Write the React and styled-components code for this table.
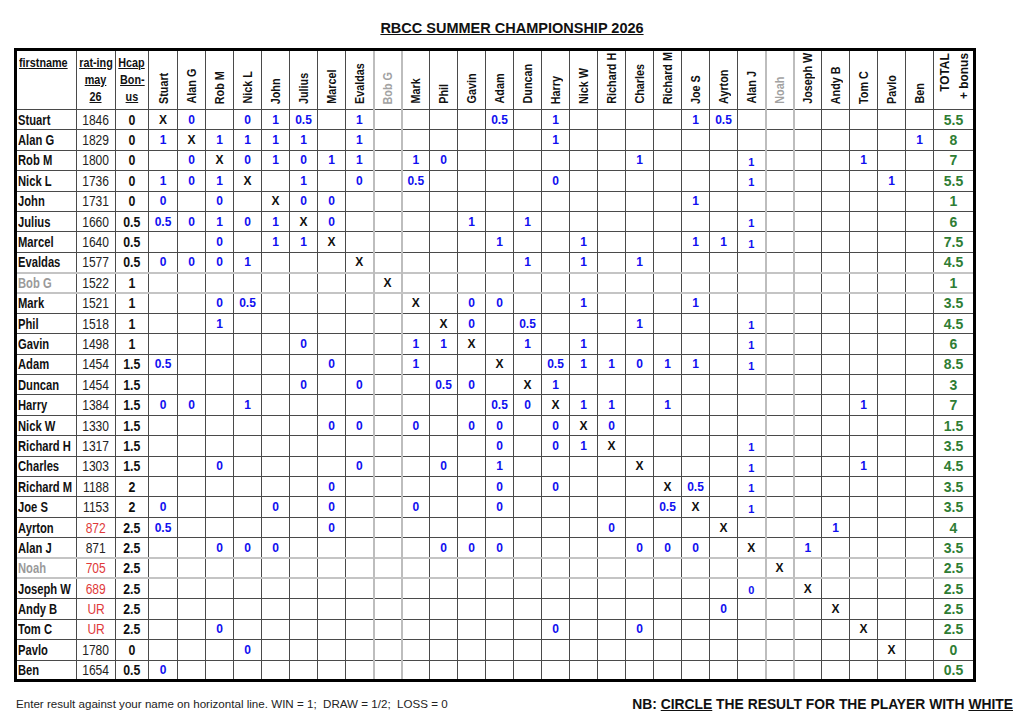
import React from 'react';
import styled, { createGlobalStyle } from 'styled-components';

const GlobalStyle = createGlobalStyle`
  html, body { margin: 0; padding: 0; background: #fff; }
  body { font-family: "Liberation Sans", Arial, sans-serif; color: #111; }
`;

const SANS = `"Liberation Sans", Arial, sans-serif`;

const Page = styled.div`
  width: 1024px;
  height: 721px;
  box-sizing: border-box;
  padding: 18px 0 0 14px;
  display: flex;
  flex-direction: column;
`;

const Title = styled.h1`
  margin: 0 0 10px -14px;
  width: 1024px;
  text-align: center;
  font-family: ${SANS};
  font-size: 14.5px;
  line-height: 20px;
  font-weight: 700;
  text-decoration: underline;
  color: #111;
`;

/* condensed look: the narrow face is not installed, so glyphs are squeezed */
const Squeeze = styled.span`
  display: inline-block;
  white-space: nowrap;
  text-decoration: ${(p) => (p.$u ? 'underline' : 'none')};
  transform: scaleX(${(p) => p.$k || 0.8});
  transform-origin: ${(p) => (p.$center ? 'center' : 'left')};
  margin: ${(p) => (p.$center ? '0 -20px' : '0')};
`;

const Grid = styled.table`
  width: 959px;
  table-layout: fixed;
  border-collapse: collapse;
  border: 3px solid #000;
`;

const HeadRow = styled.tr`
  height: 60px;
`;

const BodyRow = styled.tr`
  height: 20.4px;
`;

const cellBorder = (p) =>
  `border-left: ${p.$mutedCol ? '2px solid #bdbdbd' : '1px solid #4a4a4a'};
   border-right: ${p.$mutedCol ? '2px solid #bdbdbd' : '1px solid #4a4a4a'};
   border-top: ${p.$mutedRow ? '2px solid #c4c4c4' : '1px solid #4a4a4a'};
   border-bottom: ${p.$mutedRow ? '2px solid #c4c4c4' : '1px solid #4a4a4a'};`;

const HeadCell = styled.th`
  ${cellBorder}
  padding: ${(p) => (p.$top ? '2px 0 0 0' : '0 0 2px 0')};
  vertical-align: ${(p) => (p.$top ? 'top' : 'bottom')};
  text-align: center;
  font-family: ${SANS};
  font-weight: 700;
  font-size: 13.5px;
  overflow: hidden;
  color: ${(p) => (p.$muted ? '#a2a2a2' : '#111')};
`;

const CornerLabel = styled.div`
  text-align: ${(p) => (p.$left ? 'left' : 'center')};
  padding: 1px 0 0 ${(p) => (p.$left ? '2px' : '0')};
  font-family: ${SANS};
  font-weight: 700;
  font-size: 13.5px;
  line-height: 17px;
  color: #111;
`;

const Rotated = styled.div`
  display: inline-block;
  writing-mode: vertical-rl;
  transform: rotate(180deg);
  white-space: ${(p) => (p.$wrap ? 'pre-line' : 'nowrap')};
  text-align: ${(p) => (p.$end ? 'end' : 'start')};
  line-height: ${(p) => (p.$wrap ? '19px' : '15px')};
`;

const RotText = styled.span`
  display: inline-block;
  white-space: inherit;
  transform: scaleY(${(p) => p.$k || 0.8});
  transform-origin: ${(p) => (p.$end ? 'bottom' : 'top')};
  margin-bottom: ${(p) => (p.$end ? '0' : '-14px')};
  margin-top: ${(p) => (p.$end ? '-6px' : '0')};
`;

const NameCell = styled.td`
  ${cellBorder}
  padding: 0 0 0 1px;
  white-space: nowrap;
  overflow: hidden;
  font-family: ${SANS};
  font-weight: 700;
  font-size: 14px;
  color: ${(p) => (p.$muted ? '#9a9a9a' : '#111')};
`;

const RatingCell = styled.td`
  ${cellBorder}
  padding: 0;
  text-align: center;
  font-family: ${SANS};
  font-size: 14px;
  color: ${(p) => (p.$red ? '#e03a3a' : '#222')};
`;

const HcapCell = styled.td`
  ${cellBorder}
  padding: 0;
  text-align: center;
  font-family: ${SANS};
  font-weight: 700;
  font-size: 14px;
  color: #111;
`;

const ResultCell = styled.td`
  ${cellBorder}
  padding: ${(p) => (p.$small ? '3px 0 0 0' : '0')};
  text-align: center;
  font-family: ${SANS};
  font-weight: 700;
  font-size: ${(p) => (p.$small ? '11px' : '12px')};
  color: ${(p) => (p.$cross ? '#111' : '#1010f0')};
`;

const TotalCell = styled.td`
  ${cellBorder}
  padding: 0;
  text-align: center;
  font-family: ${SANS};
  font-weight: 700;
  font-size: 14px;
  color: #2f7d34;
`;

const Footer = styled.div`
  margin-top: 14px;
  width: 999px;
  display: flex;
  justify-content: space-between;
  align-items: center;
  padding-left: 2px;
  box-sizing: border-box;
`;

const Note = styled.div`
  font-family: ${SANS};
  font-size: 11.6px;
  white-space: pre;
  color: #222;
`;

const Warning = styled.div`
  font-family: ${SANS};
  font-weight: 700;
  font-size: 13.85px;
  color: #111;
  white-space: pre;
`;

const Under = styled.span`
  text-decoration: underline;
`;

const players = [
  'Stuart', 'Alan G', 'Rob M', 'Nick L', 'John', 'Julius', 'Marcel', 'Evaldas',
  'Bob G', 'Mark', 'Phil', 'Gavin', 'Adam', 'Duncan', 'Harry', 'Nick W',
  'Richard H', 'Charles', 'Richard M', 'Joe S', 'Ayrton', 'Alan J', 'Noah',
  'Joseph W', 'Andy B', 'Tom C', 'Pavlo', 'Ben',
];
const mutedIdx = new Set([8, 22]);
const smallCol = 21;

const rows = [
  ['Stuart', '1846', false, '0', { 0: 'X', 1: '0', 3: '0', 4: '1', 5: '0.5', 7: '1', 12: '0.5', 14: '1', 19: '1', 20: '0.5' }, '5.5'],
  ['Alan G', '1829', false, '0', { 0: '1', 1: 'X', 2: '1', 3: '1', 4: '1', 5: '1', 7: '1', 14: '1', 27: '1' }, '8'],
  ['Rob M', '1800', false, '0', { 1: '0', 2: 'X', 3: '0', 4: '1', 5: '0', 6: '1', 7: '1', 9: '1', 10: '0', 17: '1', 21: '1', 25: '1' }, '7'],
  ['Nick L', '1736', false, '0', { 0: '1', 1: '0', 2: '1', 3: 'X', 5: '1', 7: '0', 9: '0.5', 14: '0', 21: '1', 26: '1' }, '5.5'],
  ['John', '1731', false, '0', { 0: '0', 2: '0', 4: 'X', 5: '0', 6: '0', 19: '1' }, '1'],
  ['Julius', '1660', false, '0.5', { 0: '0.5', 1: '0', 2: '1', 3: '0', 4: '1', 5: 'X', 6: '0', 11: '1', 13: '1', 21: '1' }, '6'],
  ['Marcel', '1640', false, '0.5', { 2: '0', 4: '1', 5: '1', 6: 'X', 12: '1', 15: '1', 19: '1', 20: '1', 21: '1' }, '7.5'],
  ['Evaldas', '1577', false, '0.5', { 0: '0', 1: '0', 2: '0', 3: '1', 7: 'X', 13: '1', 15: '1', 17: '1' }, '4.5'],
  ['Bob G', '1522', false, '1', { 8: 'X' }, '1'],
  ['Mark', '1521', false, '1', { 2: '0', 3: '0.5', 9: 'X', 11: '0', 12: '0', 15: '1', 19: '1' }, '3.5'],
  ['Phil', '1518', false, '1', { 2: '1', 10: 'X', 11: '0', 13: '0.5', 17: '1', 21: '1' }, '4.5'],
  ['Gavin', '1498', false, '1', { 5: '0', 9: '1', 10: '1', 11: 'X', 13: '1', 15: '1', 21: '1' }, '6'],
  ['Adam', '1454', false, '1.5', { 0: '0.5', 6: '0', 9: '1', 12: 'X', 14: '0.5', 15: '1', 16: '1', 17: '0', 18: '1', 19: '1', 21: '1' }, '8.5'],
  ['Duncan', '1454', false, '1.5', { 5: '0', 7: '0', 10: '0.5', 11: '0', 13: 'X', 14: '1' }, '3'],
  ['Harry', '1384', false, '1.5', { 0: '0', 1: '0', 3: '1', 12: '0.5', 13: '0', 14: 'X', 15: '1', 16: '1', 18: '1', 25: '1' }, '7'],
  ['Nick W', '1330', false, '1.5', { 6: '0', 7: '0', 9: '0', 11: '0', 12: '0', 14: '0', 15: 'X', 16: '0' }, '1.5'],
  ['Richard H', '1317', false, '1.5', { 12: '0', 14: '0', 15: '1', 16: 'X', 21: '1' }, '3.5'],
  ['Charles', '1303', false, '1.5', { 2: '0', 7: '0', 10: '0', 12: '1', 17: 'X', 21: '1', 25: '1' }, '4.5'],
  ['Richard M', '1188', false, '2', { 6: '0', 12: '0', 14: '0', 18: 'X', 19: '0.5', 21: '1' }, '3.5'],
  ['Joe S', '1153', false, '2', { 0: '0', 4: '0', 6: '0', 9: '0', 12: '0', 18: '0.5', 19: 'X', 21: '1' }, '3.5'],
  ['Ayrton', '872', true, '2.5', { 0: '0.5', 6: '0', 16: '0', 20: 'X', 24: '1' }, '4'],
  ['Alan J', '871', false, '2.5', { 2: '0', 3: '0', 4: '0', 10: '0', 11: '0', 12: '0', 17: '0', 18: '0', 19: '0', 21: 'X', 23: '1' }, '3.5'],
  ['Noah', '705', true, '2.5', { 22: 'X' }, '2.5'],
  ['Joseph W', '689', true, '2.5', { 21: '0', 23: 'X' }, '2.5'],
  ['Andy B', 'UR', true, '2.5', { 20: '0', 24: 'X' }, '2.5'],
  ['Tom C', 'UR', true, '2.5', { 2: '0', 14: '0', 17: '0', 25: 'X' }, '2.5'],
  ['Pavlo', '1780', false, '0', { 3: '0', 26: 'X' }, '0'],
  ['Ben', '1654', false, '0.5', { 0: '0' }, '0.5'],
];

const colWidths = [61, 39, 33, 29, ...Array(27).fill(28), 41];

export default function App() {
  return (
    <>
      <GlobalStyle />
      <Page>
        <Title>RBCC SUMMER CHAMPIONSHIP 2026</Title>
        <Grid>
          <colgroup>
            {colWidths.map((w, i) => (
              <col key={i} style={{ width: w }} />
            ))}
          </colgroup>
          <thead>
            <HeadRow>
              <HeadCell $top>
                <CornerLabel $left>
                  <Squeeze $u>firstname</Squeeze>
                </CornerLabel>
              </HeadCell>
              <HeadCell $top>
                <CornerLabel>
                  <Squeeze $u $center>rat-ing</Squeeze><br />
                  <Squeeze $u $center>may</Squeeze><br />
                  <Squeeze $u $center>26</Squeeze>
                </CornerLabel>
              </HeadCell>
              <HeadCell $top>
                <CornerLabel>
                  <Squeeze $u $center>Hcap</Squeeze><br />
                  <Squeeze $u $center>Bon-</Squeeze><br />
                  <Squeeze $u $center>us</Squeeze>
                </CornerLabel>
              </HeadCell>
              {players.map((p, i) => (
                <HeadCell key={p} $muted={mutedIdx.has(i)} $mutedCol={mutedIdx.has(i)}>
                  <Rotated>
                    <RotText>{p}</RotText>
                  </Rotated>
                </HeadCell>
              ))}
              <HeadCell $top>
                <Rotated $wrap $end>
                  <RotText $end $k={0.88}>{'TOTAL\n+ bonus'}</RotText>
                </Rotated>
              </HeadCell>
            </HeadRow>
          </thead>
          <tbody>
            {rows.map(([name, rating, red, hcap, res, total], r) => {
              const mutedRow = mutedIdx.has(r);
              return (
                <BodyRow key={name}>
                  <NameCell $muted={mutedRow} $mutedRow={mutedRow}>
                    <Squeeze>{name}</Squeeze>
                  </NameCell>
                  <RatingCell $red={red} $mutedRow={mutedRow}>
                    <Squeeze $center $k={0.86}>{rating}</Squeeze>
                  </RatingCell>
                  <HcapCell $mutedRow={mutedRow}>
                    <Squeeze $center $k={0.88}>{hcap}</Squeeze>
                  </HcapCell>
                  {players.map((p, c) => (
                    <ResultCell
                      key={p}
                      $cross={res[c] === 'X'}
                      $small={c === smallCol && res[c] !== 'X'}
                      $mutedCol={mutedIdx.has(c)}
                      $mutedRow={mutedRow}
                    >
                      {res[c] || ''}
                    </ResultCell>
                  ))}
                  <TotalCell $mutedRow={mutedRow}>{total}</TotalCell>
                </BodyRow>
              );
            })}
          </tbody>
        </Grid>
        <Footer>
          <Note>{'Enter result against your name on horizontal line. WIN = 1;  DRAW = 1/2;  LOSS = 0'}</Note>
          <Warning>
            NB: <Under>CIRCLE</Under> THE RESULT FOR THE PLAYER WITH <Under>WHITE</Under>
          </Warning>
        </Footer>
      </Page>
    </>
  );
}
